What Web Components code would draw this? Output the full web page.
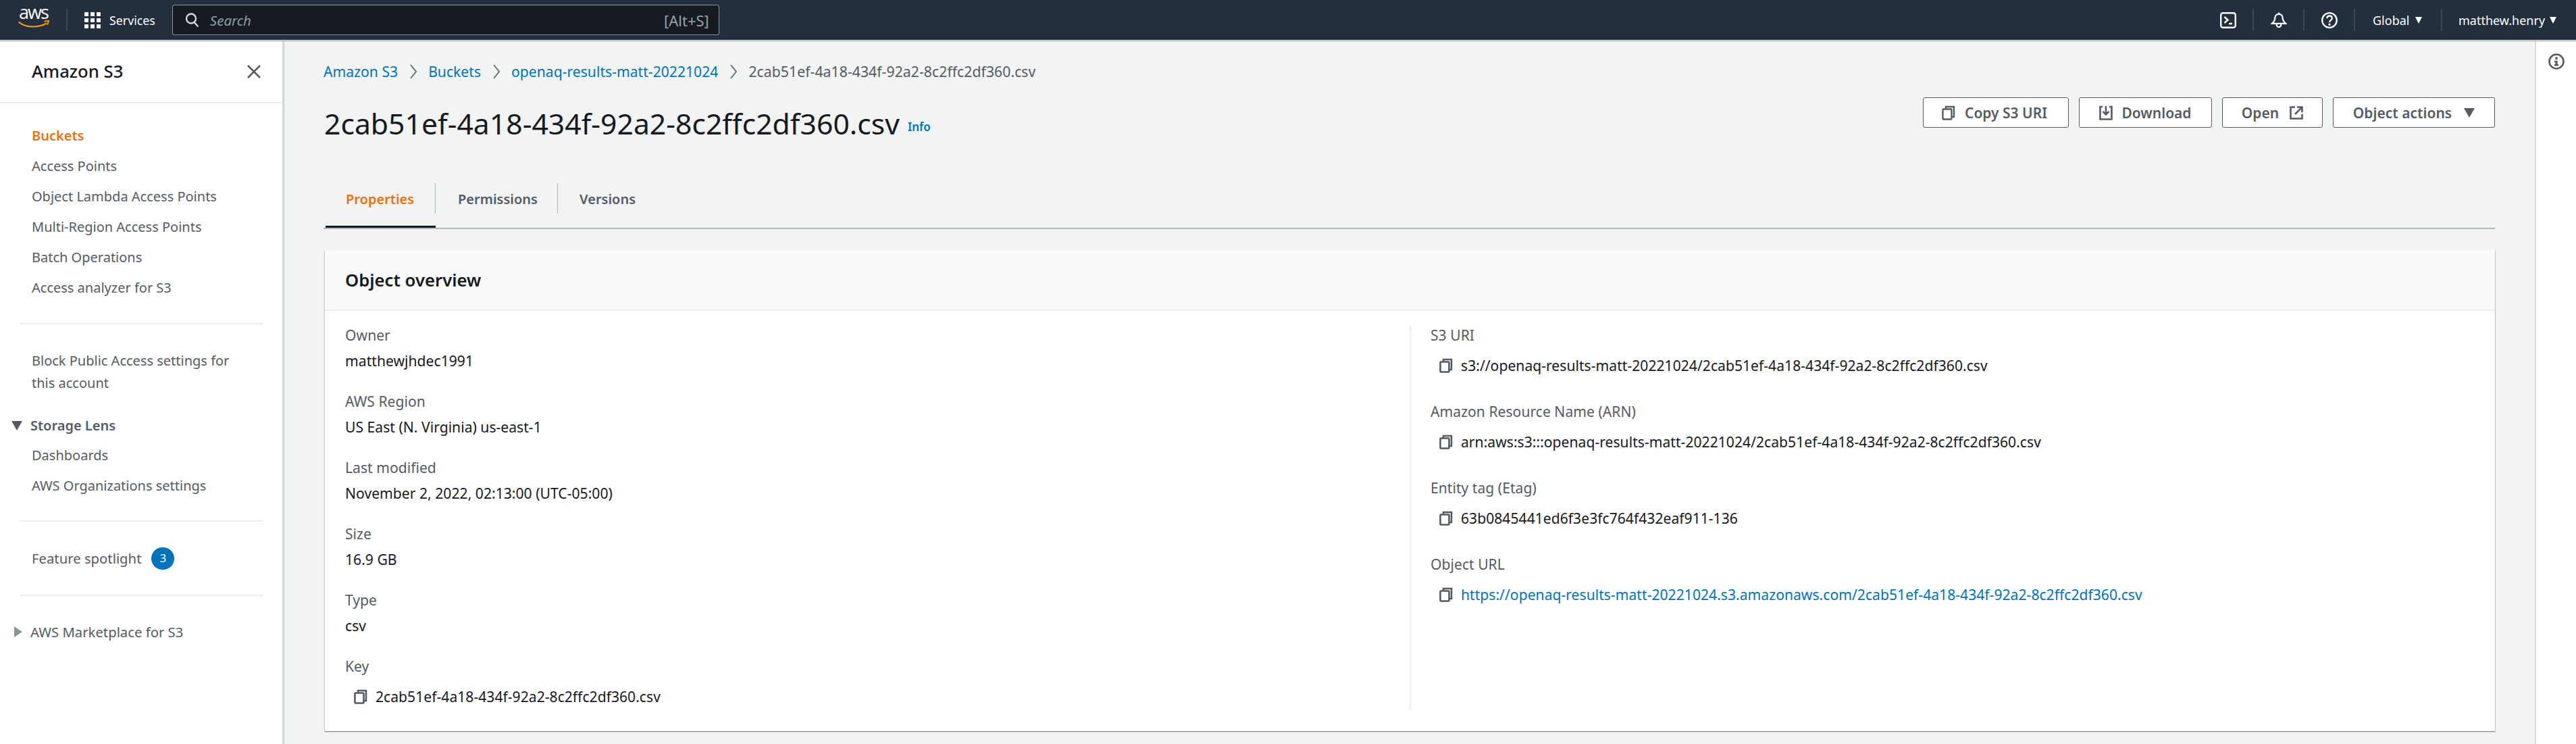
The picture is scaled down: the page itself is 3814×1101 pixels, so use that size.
<!DOCTYPE html>
<html lang="en"><head><meta charset="utf-8"><title>S3 object</title>
<style>
html,body{margin:0;height:100%;overflow:hidden;background:#f2f3f3}
body{font:20px/28px "Noto Sans",sans-serif;color:#16191f}
</style></head><body>
<aws-app>
  <aws-topbar slot="top"></aws-topbar>
  <aws-sidenav slot="nav"></aws-sidenav>
  <aws-main slot="main"></aws-main>
  <aws-panel slot="panel"></aws-panel>
</aws-app>
<script>
const ICON={
 copy:'<svg width="22" height="22" viewBox="0 0 22 22" fill="none" stroke="#545b64" stroke-width="2.6"><path d="M7 5V2h12v15h-3"/><rect x="2.5" y="5.5" width="13" height="15" rx="1"/></svg>',
};
function def(name,html,init){
 customElements.define(name,class extends HTMLElement{
  constructor(){super();const r=this.attachShadow({mode:'open'});r.innerHTML=typeof html==='function'?html(this):html;}
  connectedCallback(){ if(init) init(this); }
 });
}
def('aws-app',`<style>
:host{display:flex;flex-direction:column;height:1101px;width:3814px}
.body{flex:1;display:flex;min-height:0}
::slotted([slot=main]){flex:1;min-width:0}
</style><slot name="top"></slot><div class="body"><slot name="nav"></slot><slot name="main"></slot><slot name="panel"></slot></div>`);

def('top-div',`<style>:host{display:block;width:2px;height:33px;background:#414750;flex:none}</style>`);
def('aws-topbar',`<style>
:host{display:flex;align-items:center;height:59px;background:#232f3e;border-bottom:1px solid #fff;box-shadow:0 1px 0 #879596;color:#fff;box-sizing:content-box;flex:none;position:relative;z-index:2}
.logo{margin-left:27px;width:46px;align-self:flex-start;padding-top:4px;display:flex;flex-direction:column;flex:none;font:400 27px/28px "Open Sans",sans-serif;letter-spacing:-2px}
.logo span{padding-left:1px;white-space:nowrap}
.logo svg{display:block;margin-top:-2px}
.sp{margin-left:25px}
.grid{margin-left:25px;flex:none;display:block}
.svc{margin-left:13px;line-height:24px;flex:none;font-size:17.8px}
.search{margin-left:25px;width:808px;height:43px;border:1px solid #879596;border-radius:3px;background:#161b22;display:flex;align-items:center;flex:none}
.search svg{margin-left:18px;flex:none}
.search i{margin-left:16px;flex:1;font-size:20.5px;color:#8d9fa3}
.search span{margin-right:14px;font-size:22px;color:#95a5a6}
.fill{flex:1}
.ic{display:block;flex:none}
.lbl{flex:none;font-size:18px;white-space:nowrap}
.car{width:0;height:0;border-left:5.5px solid transparent;border-right:5.5px solid transparent;border-top:10px solid #fff;flex:none}
</style>
<div class="logo"><span>aws</span><svg width="46" height="14" viewBox="0 0 46 14"><path d="M0.500 2.500c6 4.600 13.500 7 21.500 7 7 0 14-1.800 20-5" fill="none" stroke="#f90" stroke-width="2.200"/><path d="M38.500 1.500l6.500-.8-1.800 6" fill="none" stroke="#f90" stroke-width="2"/></svg></div>
<top-div class="sp"></top-div>
<svg class="grid" width="24" height="24" viewBox="0 0 24 24" fill="#fff"><rect width="6" height="6" rx="1"/><rect x="9" width="6" height="6" rx="1"/><rect x="18" width="6" height="6" rx="1"/><rect y="9" width="6" height="6" rx="1"/><rect x="9" y="9" width="6" height="6" rx="1"/><rect x="18" y="9" width="6" height="6" rx="1"/><rect y="18" width="6" height="6" rx="1"/><rect x="9" y="18" width="6" height="6" rx="1"/><rect x="18" y="18" width="6" height="6" rx="1"/></svg>
<span class="svc">Services</span>
<div class="search"><svg width="21" height="23" viewBox="0 0 21 23" fill="none" stroke="#d5dbdb" stroke-width="2.400"><circle cx="9" cy="9.500" r="7"/><path d="M13.500 15l6 6.500"/></svg><i>Search</i><span>[Alt+S]</span></div>
<div class="fill"></div>
<svg class="ic" width="24" height="24" viewBox="0 0 24 24" fill="none" stroke="#fff" stroke-width="2.400"><rect x="1.200" y="1.200" width="21.600" height="21.600" rx="3"/><path d="M6.500 7l5 4.500-5 4.500M13 17h5"/></svg>
<top-div style="margin-left:24px"></top-div>
<svg class="ic" style="margin-left:25px" width="24" height="25" viewBox="0 0 24 26" fill="none" stroke="#fff" stroke-width="2.300"><path d="M12 1.500v2.500M12 4c-4 0-6 3-6 6.500 0 4-1.500 5.500-4.500 8h21c-3-2.500-4.500-4-4.500-8C18 7 16 4 12 4zM8.500 18.500c0 3.500 1.500 5.500 3.500 5.500s3.500-2 3.500-5.500"/></svg>
<top-div style="margin-left:24px"></top-div>
<svg class="ic" style="margin-left:25px" width="24" height="24" viewBox="0 0 24 24" fill="none" stroke="#fff" stroke-width="2.300"><circle cx="12" cy="12" r="10.800"/><path d="M8.300 9.300c0-2.300 1.600-3.800 3.800-3.800s3.700 1.400 3.700 3.400c0 2.900-3.800 3-3.800 6"/><circle cx="12" cy="18.300" r=".6" fill="#fff"/></svg>
<top-div style="margin-left:24px"></top-div>
<span class="lbl" style="margin-left:26px;width:53px">Global</span><span class="car" style="margin-left:10px"></span>
<top-div style="margin-left:28px"></top-div>
<span class="lbl" style="margin-left:24px;width:125px">matthew.henry</span><span class="car" style="margin-left:10px;margin-right:29px"></span>`);

def('nav-link',`<style>:host{display:flex;align-items:center;min-height:45px;padding-left:47px;color:#545b64;font-size:20px;line-height:33px}
:host([active]){color:#ec7211;font-weight:600}
</style><slot></slot>`);
def('nav-rule',`<style>:host{display:block;height:2px;background:#eaeded;margin:0 29px}</style>`);
def('aws-sidenav',`<style>
:host{display:flex;flex-direction:column;width:418px;border-right:2px solid #d5dbdb;background:#fff;flex:none;color:#545b64;font-size:20px;position:relative;box-shadow:1px 0 0 #c8cfcf}
.head{height:91px;display:flex;align-items:center;padding:0 32px 0 47px;border-bottom:2px solid #eaeded;justify-content:space-between}
h2{margin:0;font-size:25.7px;font-weight:500;color:#16191f;line-height:34px}
.g{padding-top:25px;padding-bottom:30px}
.blk{padding:37px 29px 0 47px;line-height:33px;width:330px}
.sec{display:flex;align-items:center;margin-top:30px;padding-left:17px;height:33px;font-weight:600;color:#545b64}
.sec svg{margin-right:12px}
.spot{display:flex;align-items:center;padding-left:47px;height:36px;margin:36px 0}
.badge{margin-left:15px;width:34px;height:33px;border-radius:17px;background:#0073bb;color:#fff;font-size:17px;display:flex;align-items:center;justify-content:center}
.mp{display:flex;align-items:center;padding-left:21px;height:33px;margin-top:36px;font-size:20.3px}
.mp svg{margin-right:12px}
</style>
<div class="head"><h2>Amazon S3</h2><svg width="20" height="20" viewBox="0 0 20 20" stroke="#545b64" stroke-width="2.500" fill="none"><path d="M1 1l18 18M19 1L1 19"/></svg></div>
<div class="g"><nav-link active>Buckets</nav-link><nav-link>Access Points</nav-link><nav-link>Object Lambda Access Points</nav-link><nav-link>Multi-Region Access Points</nav-link><nav-link>Batch Operations</nav-link><nav-link>Access analyzer for S3</nav-link></div>
<nav-rule></nav-rule>
<div class="blk">Block Public Access settings for this account</div>
<div class="sec"><svg width="16" height="14" viewBox="0 0 16 14" fill="#545b64"><path d="M0 0h16L8 14z"/></svg>Storage Lens</div>
<nav-link style="margin-top:5px">Dashboards</nav-link><nav-link>AWS Organizations settings</nav-link>
<nav-rule style="margin-top:29px"></nav-rule>
<div class="spot"><span style="font-size:20.3px">Feature spotlight</span><span class="badge">3</span></div>
<nav-rule></nav-rule>
<div class="mp"><svg width="12" height="16" viewBox="0 0 12 16" fill="#879596"><path d="M0 0l12 8-12 8z"/></svg>AWS Marketplace for S3</div>`);

def('aws-crumbs',`<style>:host{display:flex;align-items:center;height:32px;color:#0073bb;font-size:21.15px}
svg{margin:0 16.5px;flex:none}span{color:#545b64;font-size:21.3px}</style>
Amazon S3<svg width="12" height="22" viewBox="0 0 12 22" fill="none" stroke="#687078" stroke-width="2"><path d="M2 1l8 10-8 10"/></svg>Buckets<svg width="12" height="22" viewBox="0 0 12 22" fill="none" stroke="#687078" stroke-width="2"><path d="M2 1l8 10-8 10"/></svg>openaq-results-matt-20221024<svg width="12" height="22" viewBox="0 0 12 22" fill="none" stroke="#687078" stroke-width="2"><path d="M2 1l8 10-8 10"/></svg><span>2cab51ef-4a18-434f-92a2-8c2ffc2df360.csv</span>`);

def('aws-btn',`<style>:host{display:inline-flex;align-items:center;justify-content:center;box-sizing:border-box;height:45px;border:1px solid #545b64;border-radius:3px;background:#fff;color:#545b64;font-size:21px;font-weight:600;gap:13px;flex:none}
::slotted(svg){display:block;flex:none}</style><slot></slot>`);

def('aws-tabs',`<style>:host{display:flex;height:67px;box-sizing:border-box;border-bottom:2px solid #aab7b8;padding-left:3px;font-size:20px;font-weight:600;color:#545b64}
.t{position:relative;display:flex;align-items:center;padding-bottom:20px;box-sizing:border-box;height:65px}
.t+.t::before{content:"";position:absolute;left:-1px;top:-1px;height:45px;width:1px;background:#aab7b8}
.a{color:#ec7211;width:163px;padding-left:30px}
.a::after{content:"";position:absolute;left:0;right:0;bottom:0;height:3px;background:#16191f}
.p{width:181px;padding-left:33px}.v{padding-left:32px}</style>
<div class="t a">Properties</div><div class="t p">Permissions</div><div class="t v">Versions</div>`);

def('kv-item',`<style>:host{display:block;color:#16191f;font-size:21.15px;line-height:28px}
.k{color:#545b64;display:block;margin-bottom:10px}
.v{display:flex;align-items:center}
:host([copy]) .v{padding-left:12px;gap:11px}
:host([copy]) .k{margin-bottom:17px}
:host([link]) .v{color:#0073bb}
svg{flex:none;display:block}
</style>`,el=>{
 const r=el.shadowRoot;
 if(r.querySelector('.k'))return;
 const d=document.createElement('div');
 d.innerHTML=`<span class="k">${el.getAttribute('k')}</span><div class="v">${el.hasAttribute('copy')?ICON.copy:''}<span>${el.getAttribute('v')}</span></div>`;
 r.append(...d.childNodes);
});

def('aws-card',`<style>:host{display:block;background:#fff;box-shadow:0 1px 1px 0 rgba(0,28,36,.3),1px 1px 1px 0 rgba(0,28,36,.15),-1px 1px 1px 0 rgba(0,28,36,.15);height:712px;box-sizing:border-box}
.h{height:90px;background:#fafafa;border-bottom:2px solid #eaeded;box-sizing:border-box;display:flex;align-items:center;padding-left:30px;padding-top:2px;font-size:25.7px;font-weight:600;color:#16191f}
.cols{display:grid;grid-template-columns:1606px 1fr;padding-top:22px}
.l{padding-left:30px;display:flex;flex-direction:column;gap:32px}
.r{border-left:2px solid #eaeded;padding-left:29px;height:568px;display:flex;flex-direction:column;gap:40px;box-sizing:border-box}
</style><div class="h">Object overview</div><div class="cols"><div class="l">
<kv-item k="Owner" v="matthewjhdec1991"></kv-item>
<kv-item k="AWS Region" v="US East (N. Virginia) us-east-1"></kv-item>
<kv-item k="Last modified" v="November 2, 2022, 02:13:00 (UTC-05:00)"></kv-item>
<kv-item k="Size" v="16.9 GB"></kv-item>
<kv-item k="Type" v="csv"></kv-item>
<kv-item copy k="Key" v="2cab51ef-4a18-434f-92a2-8c2ffc2df360.csv"></kv-item>
</div><div class="r">
<kv-item copy k="S3 URI" v="s3://openaq-results-matt-20221024/2cab51ef-4a18-434f-92a2-8c2ffc2df360.csv"></kv-item>
<kv-item copy k="Amazon Resource Name (ARN)" v="arn:aws:s3:::openaq-results-matt-20221024/2cab51ef-4a18-434f-92a2-8c2ffc2df360.csv"></kv-item>
<kv-item copy k="Entity tag (Etag)" v="63b0845441ed6f3e3fc764f432eaf911-136"></kv-item>
<kv-item copy k="Object URL" v="https://openaq-results-matt-20221024.s3.amazonaws.com/2cab51ef-4a18-434f-92a2-8c2ffc2df360.csv" link></kv-item>
</div></div>`);

def('aws-main',`<style>:host{display:block;padding:30px 59px 0 59px;background:#f2f3f3;box-sizing:border-box}
.hd{display:flex;justify-content:space-between;align-items:flex-start;margin-top:22px;height:70px;padding-left:1px}
h1{margin:0;font-size:42.7px;line-height:58px;font-weight:400;color:#16191f;display:flex;align-items:center;margin-top:10px}
h1 small{font-size:17px;font-weight:600;color:#0073bb;margin-left:12px;margin-top:10px;line-height:20px}
.acts{display:flex;gap:15px}
aws-tabs{margin-top:58px}
aws-card{margin:31px 0 0 2px}
</style><aws-crumbs></aws-crumbs>
<div class="hd"><h1>2cab51ef-4a18-434f-92a2-8c2ffc2df360.csv<small>Info</small></h1><div class="acts">
<aws-btn style="width:216px;padding-right:5px"><svg width="22" height="22" viewBox="0 0 22 22" fill="none" stroke="#545b64" stroke-width="2.400"><path d="M7 5V2h12v15h-3"/><rect x="2.500" y="5.500" width="13" height="15" rx="1"/></svg>Copy S3 URI</aws-btn>
<aws-btn style="width:197px"><svg width="20" height="22" viewBox="0 0 20 22" fill="none" stroke="#545b64" stroke-width="2.600"><path d="M5 2H1.500v18.500h17V2H15M10 1v12M5.500 9l4.500 4.500L14.500 9"/></svg>Download</aws-btn>
<aws-btn style="width:149px;gap:16px">Open<svg width="20" height="20" viewBox="0 0 20 20" fill="none" stroke="#545b64" stroke-width="2.600"><path d="M8 1.500H1.500v17h17V12M11 1.500h7.500V9M18 2L8 12"/></svg></aws-btn>
<aws-btn style="width:240px;gap:18px">Object actions<svg width="16" height="14" viewBox="0 0 16 14" fill="#545b64"><path d="M0 0h16L8 14z"/></svg></aws-btn>
</div></div><aws-tabs></aws-tabs><aws-card></aws-card>`);

def('aws-panel',`<style>:host{display:flex;justify-content:center;width:59px;flex:none;background:#fff;border-left:2px solid #d5dbdb;padding-top:19px;box-sizing:content-box}
svg{display:block}</style><svg width="24" height="24" viewBox="0 0 24 24"><circle cx="12" cy="12" r="10.500" fill="none" stroke="#545b64" stroke-width="2.600"/><rect x="10.300" y="5.500" width="3.400" height="3.400" fill="#545b64"/><path d="M9 10.800h4.700v5.200H15v2.500H9V16h1.500v-2.700H9z" fill="#545b64"/></svg>`);
</script>
</body></html>
